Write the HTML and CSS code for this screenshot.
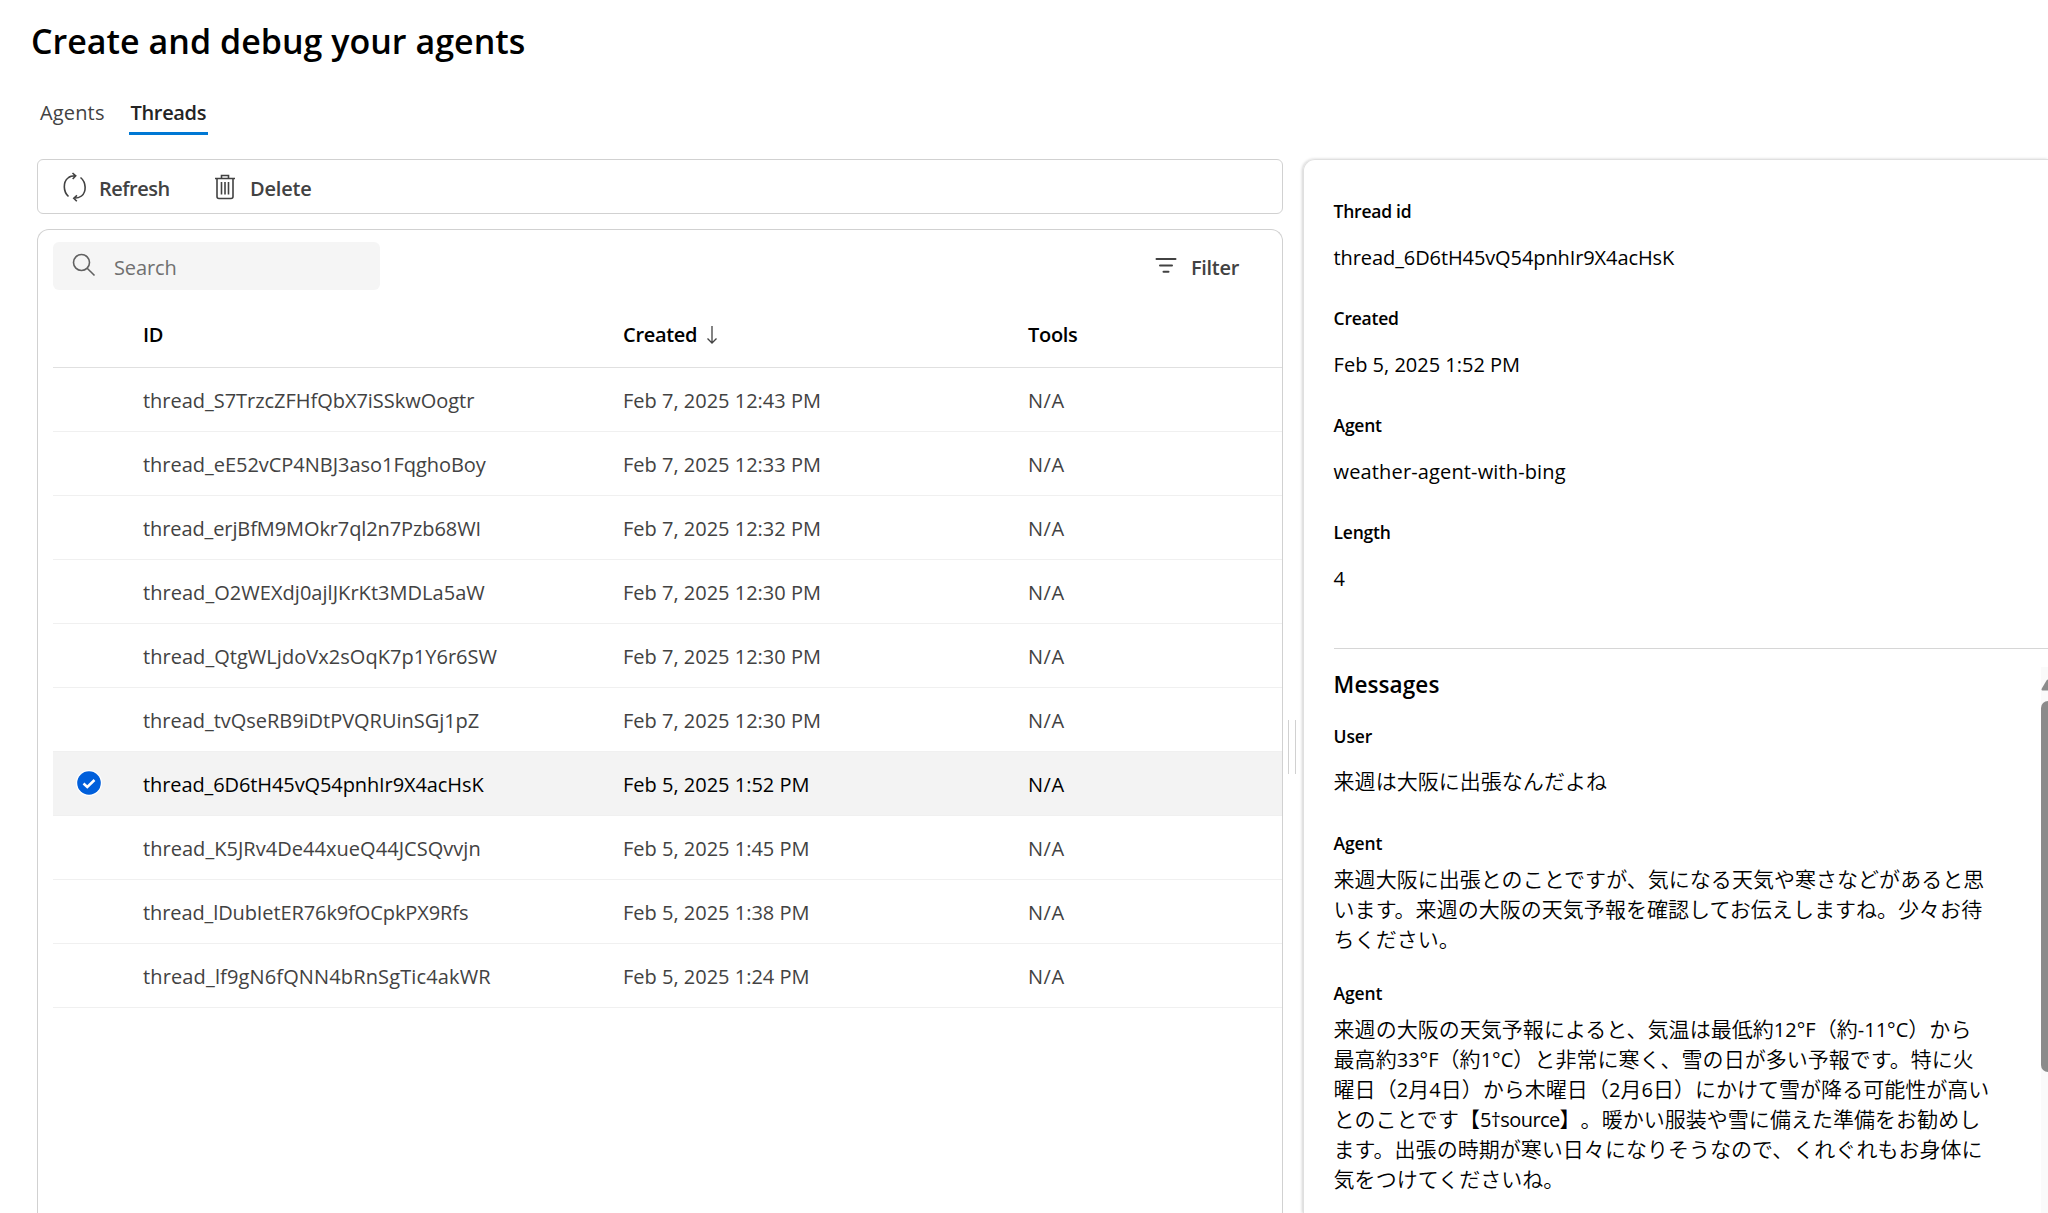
FILE: index.html
```html
<!DOCTYPE html>
<html lang="en">
<head>
<meta charset="utf-8">
<title>Create and debug your agents</title>
<link rel="stylesheet" href="styles.css">
</head>
<body>
<header class="page-head">
  <h1 class="title"><span>Create and debug your agents</span></h1>
  <nav class="tabs">
    <a class="tab"><span>Agents</span></a>
    <a class="tab tab-active"><span>Threads</span></a>
  </nav>
</header>
<main class="workspace">
  <section class="list-pane">
    <div class="toolbar">
      <button class="tool"><svg class="icon-refresh" viewBox="0 0 26 30"><path d="M6.500 24.500C1 19.500 1 10 6 6C8 4.200 10.500 3.800 13.500 3.800M10.500 1L13.700 3.900L10.700 7M18.500 5.500C24.500 10.500 24.500 20 19.500 24C17.500 25.700 15 26.200 12 26.200M15 23.300L11.800 26.200L14.800 29.200"/></svg><span class="label refresh-label">Refresh</span></button>
      <button class="tool tool-delete"><svg class="icon-trash" viewBox="0 0 22 26"><path d="M3 4.500H19M7.500 4.500V1.500H14.500V4.500M1 4.500H21M3 4.500V22.500Q3 24.500 5 24.500H17Q19 24.500 19 22.500V4.500M7.500 8V20.500M11 8V20.500M14.500 8V20.500"/></svg><span class="label">Delete</span></button>
    </div>
    <div class="list-card">
      <div class="list-tools">
        <label class="search"><svg class="icon-search" viewBox="0 0 24 24"><circle cx="9.500" cy="9.500" r="8"/><path d="M15.200 15.200L22.500 22.500"/></svg><span class="label">Search</span></label>
        <button class="filter"><svg class="icon-filter" viewBox="0 0 22 16"><path d="M1.500 2H20.500M5 8.500H17M8.500 14.700H13.500"/></svg><span class="label">Filter</span></button>
      </div>
      <div class="row row-head"><span></span><span>ID</span><span class="sorted"><span>Created</span><svg class="icon-down" viewBox="0 0 12 20"><path d="M6 1V18M1.500 13.500L6 18L10.500 13.500"/></svg></span><span>Tools</span></div>
      <div class="row"><span></span><span class="id">thread_S7TrzcZFHfQbX7iSSkwOogtr</span><span class="date">Feb 7, 2025 12:43 PM</span><span class="na">N/A</span></div>
      <div class="row"><span></span><span class="id">thread_eE52vCP4NBJ3aso1FqghoBoy</span><span class="date">Feb 7, 2025 12:33 PM</span><span class="na">N/A</span></div>
      <div class="row"><span></span><span class="id id-tight">thread_erjBfM9MOkr7ql2n7Pzb68WI</span><span class="date">Feb 7, 2025 12:32 PM</span><span class="na">N/A</span></div>
      <div class="row"><span></span><span class="id id-loose">thread_O2WEXdj0ajlJKrKt3MDLa5aW</span><span class="date">Feb 7, 2025 12:30 PM</span><span class="na">N/A</span></div>
      <div class="row"><span></span><span class="id id-loose">thread_QtgWLjdoVx2sOqK7p1Y6r6SW</span><span class="date">Feb 7, 2025 12:30 PM</span><span class="na">N/A</span></div>
      <div class="row"><span></span><span class="id">thread_tvQseRB9iDtPVQRUinSGj1pZ</span><span class="date">Feb 7, 2025 12:30 PM</span><span class="na">N/A</span></div>
      <div class="row row-selected"><svg class="icon-check" viewBox="0 0 26 26"><circle class="ring" cx="13" cy="13" r="13"/><circle class="disc" cx="13" cy="13" r="11.800"/><path d="M7.500 13.500L11.300 17L18.500 10"/></svg><span class="id id-tight">thread_6D6tH45vQ54pnhIr9X4acHsK</span><span class="date">Feb 5, 2025 1:52 PM</span><span class="na">N/A</span></div>
      <div class="row"><span></span><span class="id id-loose">thread_K5JRv4De44xueQ44JCSQvvjn</span><span class="date">Feb 5, 2025 1:45 PM</span><span class="na">N/A</span></div>
      <div class="row"><span></span><span class="id id-tight">thread_lDubIetER76k9fOCpkPX9Rfs</span><span class="date">Feb 5, 2025 1:38 PM</span><span class="na">N/A</span></div>
      <div class="row"><span></span><span class="id id-wide">thread_lf9gN6fQNN4bRnSgTic4akWR</span><span class="date">Feb 5, 2025 1:24 PM</span><span class="na">N/A</span></div>
    </div>
  </section>
  <div class="splitter"><span class="grip"></span></div>
  <aside class="detail">
    <dl class="facts">
      <dt>Thread id</dt><dd class="id-tight">thread_6D6tH45vQ54pnhIr9X4acHsK</dd>
      <dt>Created</dt><dd>Feb 5, 2025 1:52 PM</dd>
      <dt>Agent</dt><dd class="id-wide">weather-agent-with-bing</dd>
      <dt>Length</dt><dd>4</dd>
    </dl>
    <div class="chat">
      <div class="messages">
        <h2 class="messages-title"><span>Messages</span></h2>
        <h3 class="who">User</h3>
        <p class="text text-user" lang="ja">来週は大阪に出張なんだよね</p>
        <h3 class="who">Agent</h3>
        <p class="text" lang="ja">来週大阪に出張とのことですが、気になる天気や寒さなどがあると思<br>います。来週の大阪の天気予報を確認してお伝えしますね。少々お待<br>ちください。</p>
        <h3 class="who">Agent</h3>
        <p class="text" lang="ja">来週の大阪の天気予報によると、気温は最低約<span class="latin">12°F</span>（約<span class="latin">-11°C</span>）から<br>最高約<span class="latin">33°F</span>（約<span class="latin">1°C</span>）と非常に寒く、雪の日が多い予報です。特に火<br>曜日（<span class="latin">2</span>月<span class="latin">4</span>日）から木曜日（<span class="latin">2</span>月<span class="latin">6</span>日）にかけて雪が降る可能性が高い<br>とのことです【<span class="latin source">5†source</span>】。暖かい服装や雪に備えた準備をお勧めし<br>ます。出張の時期が寒い日々になりそうなので、くれぐれもお身体に<br>気をつけてくださいね。</p>
      </div>
      <div class="scrollbar"><svg class="icon-up" viewBox="0 0 14 12"><path d="M1.500 11.500Q0 11 .8 9.500L5.500 1.500Q7 -.5 8.500 1.500L13.200 9.500Q14 11 12.500 11.500Z"/></svg><span class="thumb"></span></div>
    </div>
  </aside>
</main>
</body>
</html>
```
FILE: styles.css
```css
* { box-sizing: border-box; }
html, body { height: 100%; overflow: hidden; }
body {
  margin: 0;
  display: flex;
  flex-direction: column;
  background: #fff;
  color: #000;
  font: 20px/30px "Open Sans", "Noto Sans CJK JP", sans-serif;
  white-space: nowrap;
}
h1, h2, h3, p, dl, dd { margin: 0; }
button { border: 0; padding: 0; background: none; font: inherit; color: inherit; }
svg { display: block; flex: none; fill: none; stroke: #424242; stroke-width: 1.600; }
.page-head { flex: none; height: 159px; padding-top: 17px; }
.title { padding-left: 31px; font-size: 34px; line-height: 48px; font-weight: 600; letter-spacing: .02px; }
.tabs { display: flex; gap: 22px; padding: 32px 0 0 38px; color: #424242; }
.tab { height: 38px; padding: 1px 2px 0; letter-spacing: .15px; }
.tab-active { color: #242424; font-weight: 600; letter-spacing: -.35px; border-bottom: 3px solid #0078d4; }
.workspace { flex: 1; min-height: 0; display: flex; padding-left: 37px; }
.list-pane { width: 1246px; display: flex; flex-direction: column; gap: 15px; }
.toolbar { flex: none; height: 55px; display: flex; align-items: center; padding-left: 24px; border: 1px solid #d1d1d1; border-radius: 6px; color: #424242; font-weight: 600; }
.label { padding-top: 3px; }
.toolbar .label { padding-top: 4px; }
.refresh-label { letter-spacing: -.5px; }
.tool { display: flex; align-items: center; gap: 11px; width: 152px; }
.icon-refresh { width: 26px; height: 30px; }
.icon-trash { width: 22px; height: 26px; }
.tool-delete { gap: 14px; letter-spacing: -.2px; }
.list-card { flex: 1; padding: 12px 0 0 15px; border: 1px solid #d1d1d1; border-bottom: 0; border-radius: 12px 12px 0 0; }
.list-tools { height: 48px; display: flex; justify-content: space-between; padding-right: 43px; }
.search { width: 327px; height: 48px; display: flex; align-items: center; gap: 18px; padding-left: 19px; background: #f5f5f5; border-radius: 6px; color: #707070; letter-spacing: -.1px; }
.icon-search { width: 24px; height: 24px; margin-top: -2px; stroke: #616161; }
.filter { display: flex; align-items: center; gap: 14px; color: #424242; font-weight: 600; letter-spacing: -.3px; }
.icon-filter { width: 22px; height: 16px; margin-top: -2px; stroke-width: 2; stroke-linecap: round; }
.row { height: 64px; padding-top: 2px; display: grid; grid-template-columns: 90px 480px 405px auto; align-items: center; border-bottom: 1px solid #f0f0f0; color: #424242; }
.row-head { height: 78px; padding-top: 12px; border-color: #e0e0e0; color: #000; font-weight: 600; letter-spacing: -.3px; }
.row-selected { background: #f3f3f3; color: #000; }
.id { letter-spacing: -.03px; }
.id-tight { letter-spacing: -.1px; }
.id-loose { letter-spacing: .04px; }
.id-wide { letter-spacing: .14px; }
.na { letter-spacing: .5px; }
.sorted { display: flex; align-items: center; gap: 9px; }
.icon-down { width: 12px; height: 20px; stroke-width: 1.300; }
.icon-check { width: 26px; height: 26px; margin: -3px 0 0 23px; stroke: #fff; stroke-width: 2.500; }
.ring { fill: #fff; stroke: none; }
.disc { fill: #005fdb; stroke: none; }
.splitter { width: 20px; display: flex; align-items: center; padding-left: 5px; }
.grip { width: 8px; height: 54px; margin-top: 122px; border: solid #d1d1d1; border-width: 0 1px; }
.detail { flex: 1; min-width: 0; display: flex; flex-direction: column; padding: 38px 0 0 29.600px; border-top: 1px solid #e0e0e0; border-left: 1px solid #e0e0e0; border-radius: 12px 0 0 0; box-shadow: -1px 0 3px rgba(0,0,0,.18); }
.facts { height: 451px; border-bottom: 1px solid #d6d6d6; }
.facts dt { height: 45px; line-height: 26px; font-size: 17.500px; font-weight: 600; letter-spacing: -.25px; }
.facts dd { height: 62px; line-height: 30px; }
.chat { flex: 1; min-height: 0; display: flex; justify-content: space-between; }
.messages-title { padding-top: 20px; font-size: 22.500px; line-height: 32px; font-weight: 600; letter-spacing: .1px; }
.who { font-size: 17.500px; line-height: 26px; font-weight: 600; letter-spacing: -.15px; margin-bottom: 8px; }
.messages-title + .who { margin-top: 22px; margin-bottom: 17px; }
.text { font-size: 21px; line-height: 30px; margin-bottom: 26px; font-weight: 350; letter-spacing: .03px; text-spacing-trim: space-all; }
.text-user { margin-bottom: 34px; }
.latin { font-size: 20px; font-weight: 400; line-height: 1; }
.source { letter-spacing: -.6px; }
.scrollbar { width: 7px; display: flex; flex-direction: column; margin-top: 18px; background: #fafafa; overflow: hidden; }
.icon-up { width: 14px; height: 12px; margin-top: 12px; fill: #8b8b8b; stroke: none; }
.thumb { width: 14px; height: 371px; margin-top: 10px; border-radius: 7px; background: #8b8b8b; }
```
